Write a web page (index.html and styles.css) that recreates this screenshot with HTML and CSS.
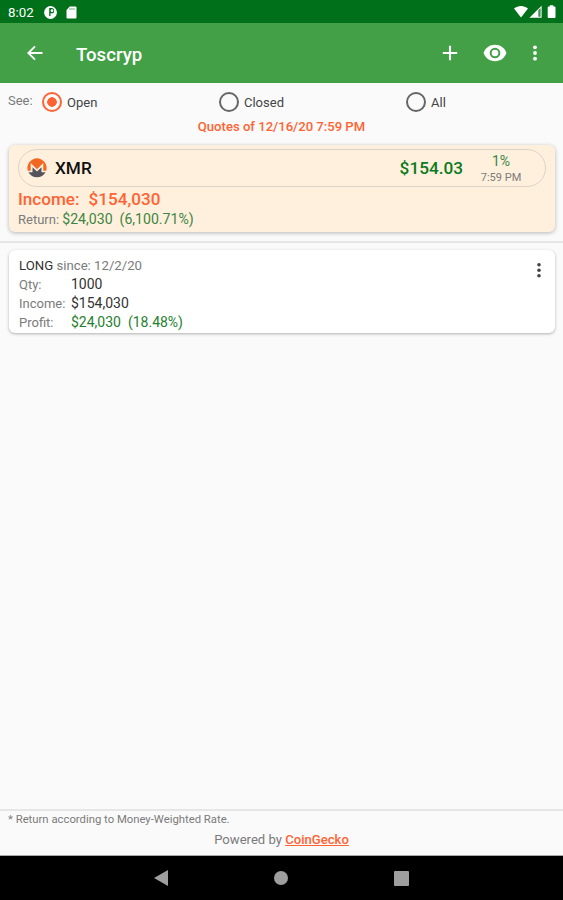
FILE: index.html
```html
<!DOCTYPE html>
<html lang="en">
<head>
    <meta charset="UTF-8">
    <meta name="viewport" content="width=device-width, initial-scale=1.0">
    <title>Toscryp</title>
    <link rel="stylesheet" href="styles.css">
</head>
<body>
    <div class="status-bar">
        <span class="clock">8:02</span>
        <svg class="status-app" width="13" height="13" viewBox="0 0 14 14">
            <circle cx="7" cy="7" r="6.9" fill="#fff"/>
            <path d="M5.6 2.2h2.600a2.800 2.800 0 0 1 0 5.600H7v3H5.600z" fill="#00701a"/>
            <circle cx="8.6" cy="5" r="1.5" fill="#fff"/>
        </svg>
        <svg class="status-sd" width="11" height="13" viewBox="0 0 11 13">
            <path d="M3.8.5H9.5a1 1 0 0 1 1 1v10a1 1 0 0 1-1 1h-8a1 1 0 0 1-1-1V4z" fill="#fff"/>
            <path d="M4 2.2v1.6M6 2.2v1.6M8 2.2v1.6" stroke="#00701a" stroke-width=".7"/>
        </svg>
        <svg class="status-signal" width="43" height="14" viewBox="0 0 43 14">
            <path d="M0 3.6C4 .2 10 .2 14 3.6L7 12.6z" fill="#fff"/>
            <path d="M27.6.8v12H15.4z" fill="#fff"/>
            <path d="M24.3 5.3l2.3-2.3v8.8h-2.3z" fill="#3f8f50"/>
            <path d="M35.8 1.5V.3h3.6v1.2h1.2a.9.9 0 0 1 .9.9v9.7a.9.9 0 0 1-.9.9h-6a.9.9 0 0 1-.9-.9V2.4a.9.9 0 0 1 .9-.9z" fill="#fff"/>
        </svg>
    </div>

    <header class="app-bar">
        <svg class="icon-back" width="16" height="16" viewBox="0 0 16 16">
            <path d="M15.5 8H1.8M8 1.3L1.3 8 8 14.7" fill="none" stroke="#fff" stroke-width="1.9"/>
        </svg>
        <h1>Toscryp</h1>
        <svg class="icon-add" width="16" height="16" viewBox="0 0 16 16">
            <path d="M8 .8v14.4M.8 8h14.4" stroke="#fff" stroke-width="2.1"/>
        </svg>
        <svg class="icon-eye" width="24" height="18" viewBox="0 0 24 18">
            <path d="M12 .8C6.6.8 2.2 4.1.6 9c1.6 4.9 6 8.2 11.4 8.2S21.8 13.9 23.4 9C21.8 4.1 17.4.8 12 .8z" fill="#fff"/>
            <circle cx="12" cy="9" r="4.3" fill="none" stroke="#43a047" stroke-width="2"/>
        </svg>
        <svg class="icon-more" width="4" height="16" viewBox="0 0 4 16">
            <circle cx="2" cy="2.3" r="1.9" fill="#fff"/>
            <circle cx="2" cy="8" r="1.9" fill="#fff"/>
            <circle cx="2" cy="13.7" r="1.9" fill="#fff"/>
        </svg>
    </header>

    <main class="content">
        <div class="filters">
            <span class="filter-label">See:</span>
            <label class="option"><span class="radio checked"></span>Open</label>
            <label class="option"><span class="radio"></span>Closed</label>
            <label class="option"><span class="radio"></span>All</label>
        </div>
        <div class="quotes">Quotes of 12/16/20 7:59 PM</div>

        <section class="summary">
            <div class="ticker">
                <svg class="coin" width="20" height="20" viewBox="0 0 20 20">
                    <path d="M.8 12.7A9.6 9.6 0 1 1 19.2 12.7H16.3V5L10 11.2 3.7 5V12.7z" fill="#f26822"/>
                    <path d="M1.5 14.2H5.5V9.2L10 13.6 14.5 9.2V14.2H18.5A9.6 9.6 0 0 1 1.5 14.2z" fill="#55535c"/>
                </svg>
                <span class="symbol">XMR</span>
                <span class="price">$154.03</span>
                <div class="change">
                    <span class="percent">1%</span>
                    <span class="time">7:59 PM</span>
                </div>
            </div>
            <div class="income"><span>Income:</span><span>$154,030</span></div>
            <div class="return">Return: <span class="gain">$24,030&nbsp; (6,100.71%)</span></div>
        </section>

        <section class="positions">
            <div class="position">
                <div class="details">
                    <div class="since"><span class="dark">LONG</span> since: 12/2/20</div>
                    <span>Qty:</span><span class="dark value">1000</span>
                    <span>Income:</span><span class="dark value">$154,030</span>
                    <span>Profit:</span><span class="profit value">$24,030&nbsp; (18.48%)</span>
                </div>
                <svg class="position-menu" width="4" height="16" viewBox="0 0 4 16">
                    <circle cx="2" cy="2.7" r="1.8" fill="#444"/>
                    <circle cx="2" cy="8.2" r="1.8" fill="#444"/>
                    <circle cx="2" cy="13.7" r="1.8" fill="#444"/>
                </svg>
            </div>
        </section>
    </main>

    <footer class="footer">
        <div class="note">* Return according to Money-Weighted Rate.</div>
        <div class="powered">Powered by <a href="#">CoinGecko</a></div>
    </footer>

    <nav class="nav-bar">
        <svg width="14" height="16" viewBox="0 0 14 16"><path d="M0 8L14 0v16z" fill="#9e9e9e"/></svg>
        <svg width="14" height="14" viewBox="0 0 14 14"><circle cx="7" cy="7" r="7" fill="#9e9e9e"/></svg>
        <svg width="15" height="15" viewBox="0 0 15 15"><rect width="15" height="15" rx="1" fill="#9e9e9e"/></svg>
    </nav>
</body>
</html>
```
FILE: styles.css
```css
* {
    box-sizing: border-box;
}
body {
    margin: 0;
    height: 900px;
    display: flex;
    flex-direction: column;
    overflow: hidden;
    background-color: #fafafa;
    font-family: Roboto, sans-serif;
    font-size: 13px;
    color: #7b7b7b;
}
svg {
    display: block;
    flex: none;
}
.status-bar {
    height: 23px;
    padding: 1px 6px 0 8px;
    display: flex;
    align-items: center;
    background-color: #00701a;
    color: #fff;
}
.clock {
    width: 36px;
    font-size: 13.3px;
}
.status-sd {
    margin-left: 9px;
}
.status-signal {
    margin-left: auto;
}
.app-bar {
    height: 60px;
    padding: 0 26px;
    display: flex;
    align-items: center;
    background-color: #43a047;
    color: #fff;
}
h1 {
    margin: 3px 0 0 33px;
    font-size: 18.6px;
    font-weight: 500;
}
.icon-back {
    margin-left: 1px;
}
.icon-add {
    margin-left: auto;
}
.icon-eye {
    margin-left: 25px;
}
.icon-more {
    margin-left: 26px;
}
.content {
    flex: 1;
}
.filters {
    height: 36px;
    padding: 2px 0 0 8px;
    display: grid;
    grid-template-columns: 34px 177px 187px auto;
    align-items: center;
}
.filter-label {
    margin-top: -4px;
}
.option {
    display: flex;
    align-items: center;
    gap: 5px;
    color: #444;
}
.radio {
    width: 20px;
    height: 20px;
    margin-top: -1px;
    border: 2px solid #666;
    border-radius: 50%;
}
.radio.checked {
    border-color: #ff6333;
    background: radial-gradient(circle, #ff6333 4.5px, transparent 5px);
}
.quotes {
    height: 26px;
    line-height: 15px;
    text-align: center;
    font-size: 13.1px;
    font-weight: 500;
    color: #ff6333;
}
.summary {
    height: 87px;
    margin: 0 8px 0 9px;
    padding: 4px 9px 0;
    border-radius: 6px;
    background-color: #fff0dd;
    box-shadow: 0 1px 4px rgba(0,0,0,0.28);
}
.ticker {
    height: 38px;
    padding: 0 23px 0 8px;
    display: flex;
    align-items: center;
    border: 1px solid #ddd3c4;
    border-radius: 19px;
}
.symbol {
    margin-left: 8px;
    font-size: 17.2px;
    font-weight: 500;
    color: #111;
}
.price {
    margin-left: auto;
    font-size: 17.2px;
    font-weight: 500;
    color: #0a7a1c;
}
.change {
    width: 42px;
    margin-left: 17px;
    padding-top: 1px;
    text-align: center;
}
.percent {
    display: block;
    line-height: 18px;
    font-size: 14px;
    color: #3c8542;
}
.time {
    display: block;
    line-height: 16px;
    font-size: 11px;
    white-space: nowrap;
}
.income {
    display: flex;
    gap: 9px;
    line-height: 24px;
    font-size: 17.1px;
    font-weight: 500;
    color: #ff6333;
}
.return {
    line-height: 17px;
}
.gain {
    font-size: 14.1px;
    color: #3c8542;
}
.positions {
    margin-top: 9px;
    padding: 7px 8px 0 9px;
    border-top: 2px solid #e6e6e6;
}
.position {
    height: 83px;
    padding: 6px 14px 0 10px;
    display: flex;
    justify-content: space-between;
    border-radius: 6px;
    background-color: #fff;
    box-shadow: 0 1px 3px rgba(0,0,0,0.3);
}
.details {
    display: grid;
    grid-template-columns: 52px auto;
    grid-auto-rows: 19px;
    line-height: 19px;
}
.since {
    grid-column: span 2;
    font-size: 13.2px;
}
.dark {
    color: #333;
}
.value {
    line-height: 18px;
    font-size: 14px;
}
.profit {
    color: #267f2d;
}
.position-menu {
    margin-top: 6px;
}
.footer {
    height: 47px;
    border-top: 2px solid #e6e6e6;
    border-bottom: 1px solid #aaa;
}
.note {
    padding-left: 8px;
    line-height: 17px;
    font-size: 11.3px;
}
.powered {
    line-height: 24px;
    text-align: center;
    font-size: 13.1px;
}
.powered a {
    font-weight: 500;
    color: #ff6333;
}
.nav-bar {
    height: 44px;
    display: flex;
    align-items: center;
    justify-content: center;
    gap: 106px;
    background-color: #000;
}
```
